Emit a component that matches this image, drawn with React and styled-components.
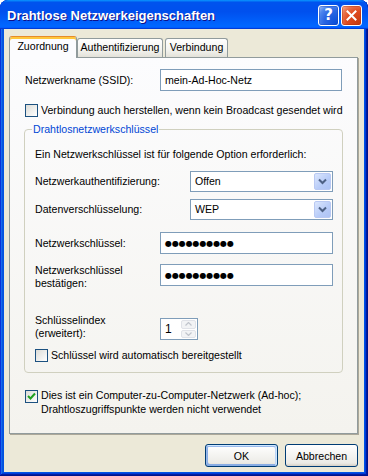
import React from 'react';
import styled, { createGlobalStyle } from 'styled-components';

const FONT = `"Liberation Sans", Arial, sans-serif`;

const GlobalStyle = createGlobalStyle`
  html, body { margin: 0; padding: 0; background: #ffffff; }
  body { font-family: ${FONT}; }
  * { box-sizing: border-box; }
`;

const Window = styled.div`
  width: 368px;
  height: 476px;
  display: flex;
  flex-direction: column;
  background: #0054e3;
  border-radius: 8px 8px 0 0;
  box-shadow: inset -1px -1px #00138c, inset 1px 1px #0831d9, inset -2px -2px #001ea0,
    inset 2px 2px #166aee, inset -3px -3px #003bda, inset 3px 3px #0855dd;
  font-family: ${FONT};
  font-size: 10.6px;
  color: #000;
  overflow: hidden;
`;

const TitleBar = styled.div`
  height: 29px;
  flex: none;
  display: flex;
  align-items: center;
  padding: 2px 6px 0 7px;
  border-radius: 8px 8px 0 0;
  background: linear-gradient(
    180deg,
    #0997ff,
    #0053ee 8%,
    #0050ee 40%,
    #06f 88%,
    #06f 93%,
    #005bff 95%,
    #003dd7 96%,
    #003dd7
  );
`;

const Title = styled.div`
  flex: 1;
  font-family: ${FONT};
  font-weight: bold;
  font-size: 13px;
  color: #fff;
  text-shadow: 1px 1px #0f1089;
  white-space: nowrap;
`;

const CaptionButtons = styled.div`
  display: flex;
  gap: 2px;
`;

const CaptionButton = styled.div`
  width: 21px;
  height: 21px;
  border: 1px solid #fff;
  border-radius: 3px;
  display: flex;
  align-items: center;
  justify-content: center;
  color: #fff;
  font-family: "DejaVu Sans", sans-serif;
  font-weight: bold;
  font-size: 15px;
  line-height: 1;
  background: ${(p) =>
    p.$close
      ? 'radial-gradient(circle at 90% 90%, #c73c11 0%, #e04a1f 50%, #e8734c 75%, #f5b29a 100%)'
      : 'radial-gradient(circle at 90% 90%, #0a4ed8 0%, #2a66e3 50%, #4c86ee 75%, #a9c3f4 100%)'};
  box-shadow: inset 0 0 0 1px ${(p) => (p.$close ? 'rgba(160,40,10,0.35)' : 'rgba(20,60,170,0.35)')};
`;

const Client = styled.div`
  flex: 1;
  margin: 0 4px 4px;
  background: #ece9d8;
  display: flex;
  flex-direction: column;
  padding: 7px 6px 0 5px;
`;

const TabStrip = styled.div`
  display: flex;
  align-items: flex-end;
  height: 22px;
  margin-bottom: -1px;
  position: relative;
  z-index: 1;
`;

const Tab = styled.div`
  height: ${(p) => (p.$active ? 22 : 19)}px;
  width: ${(p) => p.$w}px;
  margin-left: ${(p) => p.$ml || 0}px;
  margin-bottom: ${(p) => (p.$active ? 0 : 1)}px;
  border: 1px solid #919b9c;
  border-bottom: none;
  border-radius: 3px 3px 0 0;
  border-top-color: ${(p) => (p.$active ? '#e68b2c' : '#919b9c')};
  background: ${(p) =>
    p.$active ? '#fcfcfe' : 'linear-gradient(180deg, #ffffff, #f3f3ef 60%, #e3e1d9)'};
  box-shadow: ${(p) => (p.$active ? 'inset 0 2px #ffc73c' : 'none')};
  padding-top: ${(p) => (p.$active ? 3 : 2)}px;
  text-align: center;
  line-height: 13px;
  white-space: nowrap;
`;

const TabPage = styled.div`
  width: 349px;
  height: 377px;
  flex: none;
  border: 1px solid #919b9c;
  box-shadow: 1px 1px 0 #aca899;
  background: linear-gradient(180deg, #fcfcfe, #f4f3ee);
  padding: 11px 15px 0 15px;
  display: flex;
  flex-direction: column;
`;

const Row = styled.div`
  display: flex;
  align-items: ${(p) => p.$align || 'center'};
  margin-top: ${(p) => p.$mt || 0}px;
`;

const Label = styled.div`
  width: ${(p) => p.$w}px;
  flex: none;
  line-height: 13px;
  white-space: nowrap;
`;

const Edit = styled.div`
  width: ${(p) => p.$w}px;
  height: 22px;
  flex: none;
  border: 1px solid #7f9db9;
  background: #fff;
  padding-left: 4px;
  display: flex;
  align-items: center;
  line-height: 13px;
  white-space: nowrap;
`;

const Dots = styled.span`
  font-family: "DejaVu Sans", sans-serif;
  font-size: 8px;
  letter-spacing: -0.1px;
  padding-top: 1px;
`;

const Combo = styled.div`
  width: 143px;
  height: 21px;
  flex: none;
  border: 1px solid #7f9db9;
  background: #fff;
  display: flex;
  align-items: center;
  padding: 1px;
`;

const ComboText = styled.div`
  flex: 1;
  padding-left: 3px;
  line-height: 13px;
`;

const ComboArrow = styled.div`
  width: 17px;
  height: 17px;
  border: 1px solid #b9c9f3;
  border-radius: 2px;
  background: linear-gradient(135deg, #dbe6fd, #b7cbf8 60%, #aec4f5);
  display: flex;
  align-items: center;
  justify-content: center;
`;

const Spin = styled.div`
  width: 38px;
  height: 22px;
  flex: none;
  border: 1px solid #7f9db9;
  background: #fff;
  display: flex;
  align-items: stretch;
  padding: 1px;
`;

const SpinText = styled.div`
  flex: 1;
  padding-left: 3px;
  display: flex;
  align-items: center;
  font-size: 12px;
`;

const SpinButtons = styled.div`
  width: 15px;
  display: flex;
  flex-direction: column;
  gap: 1px;
`;

const SpinButton = styled.div`
  flex: 1;
  border: 1px solid #e0e2e8;
  border-radius: 2px;
  background: #f2f3f5;
  display: flex;
  align-items: center;
  justify-content: center;
`;

const CheckBox = styled.div`
  width: 13px;
  height: 13px;
  flex: none;
  border: 1px solid #1c5180;
  background: linear-gradient(135deg, #dcdcd7, #ffffff);
  display: flex;
  align-items: center;
  justify-content: center;
  margin-top: ${(p) => p.$mt || 0}px;
`;

const CheckText = styled.div`
  margin-left: 3px;
  line-height: ${(p) => p.$lh || 13}px;
  white-space: nowrap;
`;

const GroupBox = styled.fieldset`
  margin: 6px -1px 0 -1px;
  padding: 12px 8px 10px 10px;
  border: 1px solid #d0d0bf;
  border-radius: 4px;
  min-width: 0;
  display: flex;
  flex-direction: column;
`;

const Legend = styled.legend`
  color: #0046d5;
  padding: 0 1px;
  margin-left: -3px;
  line-height: 13px;
`;

const Text = styled.div`
  line-height: 13px;
  white-space: nowrap;
`;

const ButtonRow = styled.div`
  display: flex;
  justify-content: flex-end;
  gap: 7px;
  margin-top: 10px;
`;

const Button = styled.div`
  width: 73px;
  height: 23px;
  border: 1px solid #003c74;
  border-radius: 3px;
  background: linear-gradient(180deg, #ffffff, #ecebe6 86%, #d6d0c5);
  display: flex;
  align-items: center;
  justify-content: center;
  box-shadow: ${(p) =>
    p.$default
      ? 'inset -1px 1px #cee7ff, inset 1px 2px #98b8ea, inset -2px 2px #bcd4f6, inset 1px -1px #89ade4, inset 2px -2px #89ade4'
      : 'none'};
`;

const Chevron = () => (
  <svg width="9" height="7" viewBox="0 0 9 7">
    <path d="M1 1.5 L4.5 5 L8 1.5" fill="none" stroke="#4d6185" strokeWidth="2" />
  </svg>
);

const SpinArrow = ({ up }) => (
  <svg width="7" height="4" viewBox="0 0 7 4">
    <path d={up ? 'M0.5 3.5 L3.5 0.5 L6.5 3.5' : 'M0.5 0.5 L3.5 3.5 L6.5 0.5'} fill="none" stroke="#c0c4cc" strokeWidth="1.2" />
  </svg>
);

const Tick = () => (
  <svg width="9" height="9" viewBox="0 0 9 9">
    <path d="M1 4 L3.5 6.5 L8 1.5" fill="none" stroke="#21a121" strokeWidth="2" />
  </svg>
);

const CloseGlyph = () => (
  <svg width="11" height="11" viewBox="0 0 11 11">
    <path d="M1.5 1.5 L9.5 9.5 M9.5 1.5 L1.5 9.5" stroke="#fff" strokeWidth="2" strokeLinecap="square" />
  </svg>
);

export default function App() {
  return (
    <>
      <GlobalStyle />
      <Window>
        <TitleBar>
          <Title>Drahtlose Netzwerkeigenschaften</Title>
          <CaptionButtons>
            <CaptionButton>?</CaptionButton>
            <CaptionButton $close>
              <CloseGlyph />
            </CaptionButton>
          </CaptionButtons>
        </TitleBar>
        <Client>
          <TabStrip>
            <Tab $active $w={68}>Zuordnung</Tab>
            <Tab $w={86}>Authentifizierung</Tab>
            <Tab $w={63} $ml={2}>Verbindung</Tab>
          </TabStrip>
          <TabPage>
            <Row>
              <Label $w={135}>Netzwerkname (SSID):</Label>
              <Edit $w={182}>mein-Ad-Hoc-Netz</Edit>
            </Row>
            <Row $mt={13}>
              <CheckBox />
              <CheckText>Verbindung auch herstellen, wenn kein Broadcast gesendet wird</CheckText>
            </Row>
            <GroupBox>
              <Legend>Drahtlosnetzwerkschlüssel</Legend>
              <Text>Ein Netzwerkschlüssel ist für folgende Option erforderlich:</Text>
              <Row $mt={10}>
                <Label $w={155}>Netzwerkauthentifizierung:</Label>
                <Combo>
                  <ComboText>Offen</ComboText>
                  <ComboArrow>
                    <Chevron />
                  </ComboArrow>
                </Combo>
              </Row>
              <Row $mt={7}>
                <Label $w={155}>Datenverschlüsselung:</Label>
                <Combo>
                  <ComboText>WEP</ComboText>
                  <ComboArrow>
                    <Chevron />
                  </ComboArrow>
                </Combo>
              </Row>
              <Row $mt={12}>
                <Label $w={125}>Netzwerkschlüssel:</Label>
                <Edit $w={173}>
                  <Dots>●●●●●●●●●●</Dots>
                </Edit>
              </Row>
              <Row $mt={10} $align="flex-start">
                <Label $w={125}>
                  Netzwerkschlüssel
                  <br />
                  bestätigen:
                </Label>
                <Edit $w={173}>
                  <Dots>●●●●●●●●●●</Dots>
                </Edit>
              </Row>
              <Row $mt={24} $align="flex-end">
                <Label $w={125}>
                  Schlüsselindex
                  <br />
                  (erweitert):
                </Label>
                <Spin>
                  <SpinText>1</SpinText>
                  <SpinButtons>
                    <SpinButton>
                      <SpinArrow up />
                    </SpinButton>
                    <SpinButton>
                      <SpinArrow />
                    </SpinButton>
                  </SpinButtons>
                </Spin>
              </Row>
              <Row $mt={9}>
                <CheckBox />
                <CheckText>Schlüssel wird automatisch bereitgestellt</CheckText>
              </Row>
            </GroupBox>
            <Row $mt={15} $align="flex-start">
              <CheckBox $mt={2}>
                <Tick />
              </CheckBox>
              <CheckText $lh={14}>
                Dies ist ein Computer-zu-Computer-Netzwerk (Ad-hoc);
                <br />
                Drahtloszugriffspunkte werden nicht verwendet
              </CheckText>
            </Row>
          </TabPage>
          <ButtonRow>
            <Button $default>OK</Button>
            <Button>Abbrechen</Button>
          </ButtonRow>
        </Client>
      </Window>
    </>
  );
}
